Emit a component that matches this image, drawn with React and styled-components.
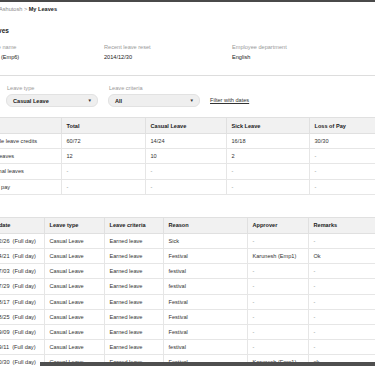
import React from "react";
import styled, { createGlobalStyle } from "styled-components";

const GlobalStyle = createGlobalStyle`
  html, body {
    margin: 0;
    padding: 0;
    background: #fff;
    overflow: hidden;
  }
  body {
    font-family: "Liberation Sans", Arial, sans-serif;
    color: #222;
  }
`;

const Page = styled.div`
  position: relative;
  width: 375px;
  height: 366px;
  overflow: hidden;
  box-sizing: border-box;
  border-top: 2px solid #4a4a4a;
`;

const Content = styled.div`
  margin-left: -24px;
  width: 416px;
`;

const Breadcrumb = styled.div`
  padding: 3px 0 0 23px;
  font-size: 5.6px;
  line-height: 8px;
  color: #888;
  b {
    color: #222;
    font-weight: 600;
  }
`;

const Title = styled.h1`
  margin: 14px 0 0;
  font-size: 6.5px;
  line-height: 8px;
  font-weight: bold;
`;

const InfoGrid = styled.div`
  display: grid;
  grid-template-columns: repeat(3, 128px);
  margin-top: 8px;
  padding-bottom: 14px;
`;

const Label = styled.div`
  font-size: 5.6px;
  line-height: 8px;
  color: #999;
`;

const Value = styled.div`
  margin-top: 2px;
  font-size: 5.6px;
  line-height: 8px;
  color: #222;
`;

const Divider = styled.div`
  margin-left: 24px;
  width: 375px;
  height: 1px;
  background: #ddd;
`;

const Filters = styled.div`
  display: flex;
  align-items: flex-end;
  gap: 10px;
  padding: 9px 0 0 30px;
`;

const Field = styled.div`
  display: flex;
  flex-direction: column;
  gap: 2px;
  width: 92px;
`;

const FieldLabel = styled.div`
  padding-left: 1px;
  font-size: 5.6px;
  line-height: 7px;
  color: #999;
`;

const Select = styled.div`
  display: flex;
  align-items: center;
  justify-content: space-between;
  height: 13px;
  padding: 0 5px 0 6px;
  box-sizing: border-box;
  background: #efefef;
  border: 1px solid #e2e2e2;
  border-radius: 6px;
  font-size: 5.6px;
  font-weight: 600;
  color: #222;
`;

const Arrow = styled.span`
  font-size: 4.5px;
  color: #333;
`;

const FilterLink = styled.a`
  margin-bottom: 3px;
  font-size: 5.6px;
  line-height: 7px;
  color: #333;
  text-decoration: underline;
`;

const Table = styled.table`
  width: 416px;
  border-collapse: collapse;
  table-layout: fixed;
  margin-top: ${(p) => p.$top}px;
`;

const Th = styled.th`
  height: 15px;
  padding: 0 4.5px;
  background: #f1f1f1;
  border: 1px solid #e0e0e0;
  text-align: left;
  font-size: 5.6px;
  font-weight: bold;
  color: #222;
`;

const Td = styled.td`
  height: 14.2px;
  padding: 0 4.5px;
  border: 1px solid #e6e6e6;
  font-size: 5.6px;
  color: ${(p) => (p.$muted ? "#888" : "#333")};
  white-space: nowrap;
  overflow: hidden;
`;

const Scroll = styled.div`
  position: absolute;
  left: 40px;
  right: 0;
  bottom: 0;
  height: 4px;
  background: #4f4f4f;
`;

const summaryCols = [85, 84, 81, 83, 83];
const summary = [
  ["", "Total", "Casual Leave", "Sick Leave", "Loss of Pay"],
  ["Available leave credits", "60/72", "14/24", "16/18", "30/30"],
  ["Taken leaves", "12", "10", "2", "-"],
  ["Additional leaves", "-", "-", "-", "-"],
  ["Loss of pay", "-", "-", "-", "-"],
];

const historyCols = [68, 60, 59, 84, 61, 84];
const historyHead = ["Leave date", "Leave type", "Leave criteria", "Reason", "Approver", "Remarks"];
const history = [
  ["2014/02/26", "Sick", "-", "-"],
  ["2014/04/21", "Festival", "Karunesh (Emp1)", "Ok"],
  ["2014/07/03", "festival", "-", "-"],
  ["2014/07/29", "festival", "-", "-"],
  ["2014/08/17", "Festival", "-", "-"],
  ["2014/08/25", "Festival", "-", "-"],
  ["2014/09/09", "Festival", "-", "-"],
  ["2014/09/11", "festival", "-", "-"],
  ["2014/10/30", "Festival", "Karunesh (Emp1)", "ok"],
];

const App = () => {
  return (
    <Page>
      <GlobalStyle />
      <Content>
        <Breadcrumb>
          Ashutosh &gt; <b>My Leaves</b>
        </Breadcrumb>
        <Title>My Leaves</Title>
        <InfoGrid>
          <div>
            <Label>Employee name</Label>
            <Value>Ashutosh (Emp6)</Value>
          </div>
          <div>
            <Label>Recent leave reset</Label>
            <Value>2014/12/30</Value>
          </div>
          <div>
            <Label>Employee department</Label>
            <Value>English</Value>
          </div>
        </InfoGrid>
        <Divider />
        <Filters>
          <Field>
            <FieldLabel>Leave type</FieldLabel>
            <Select>
              Casual Leave <Arrow>▼</Arrow>
            </Select>
          </Field>
          <Field>
            <FieldLabel>Leave criteria</FieldLabel>
            <Select>
              All <Arrow>▼</Arrow>
            </Select>
          </Field>
          <FilterLink>Filter with dates</FilterLink>
        </Filters>

        <Table $top={10}>
          <colgroup>
            {summaryCols.map((w, i) => (
              <col key={i} style={{ width: w }} />
            ))}
          </colgroup>
          <thead>
            <tr>
              {summary[0].map((h, i) => (
                <Th key={i}>{h}</Th>
              ))}
            </tr>
          </thead>
          <tbody>
            {summary.slice(1).map((row, r) => (
              <tr key={r}>
                {row.map((c, i) => (
                  <Td key={i} $muted={c === "-"}>
                    {c}
                  </Td>
                ))}
              </tr>
            ))}
          </tbody>
        </Table>

        <Table $top={22}>
          <colgroup>
            {historyCols.map((w, i) => (
              <col key={i} style={{ width: w }} />
            ))}
          </colgroup>
          <thead>
            <tr>
              {historyHead.map((h) => (
                <Th key={h}>{h}</Th>
              ))}
            </tr>
          </thead>
          <tbody>
            {history.map(([date, reason, approver, remarks]) => (
              <tr key={date}>
                <Td>
                  {date}&nbsp;&nbsp;(Full day)
                </Td>
                <Td>Casual Leave</Td>
                <Td>Earned leave</Td>
                <Td>{reason}</Td>
                <Td $muted={approver === "-"}>{approver}</Td>
                <Td $muted={remarks === "-"}>{remarks}</Td>
              </tr>
            ))}
          </tbody>
        </Table>
      </Content>
      <Scroll />
    </Page>
  );
};

export default App;
